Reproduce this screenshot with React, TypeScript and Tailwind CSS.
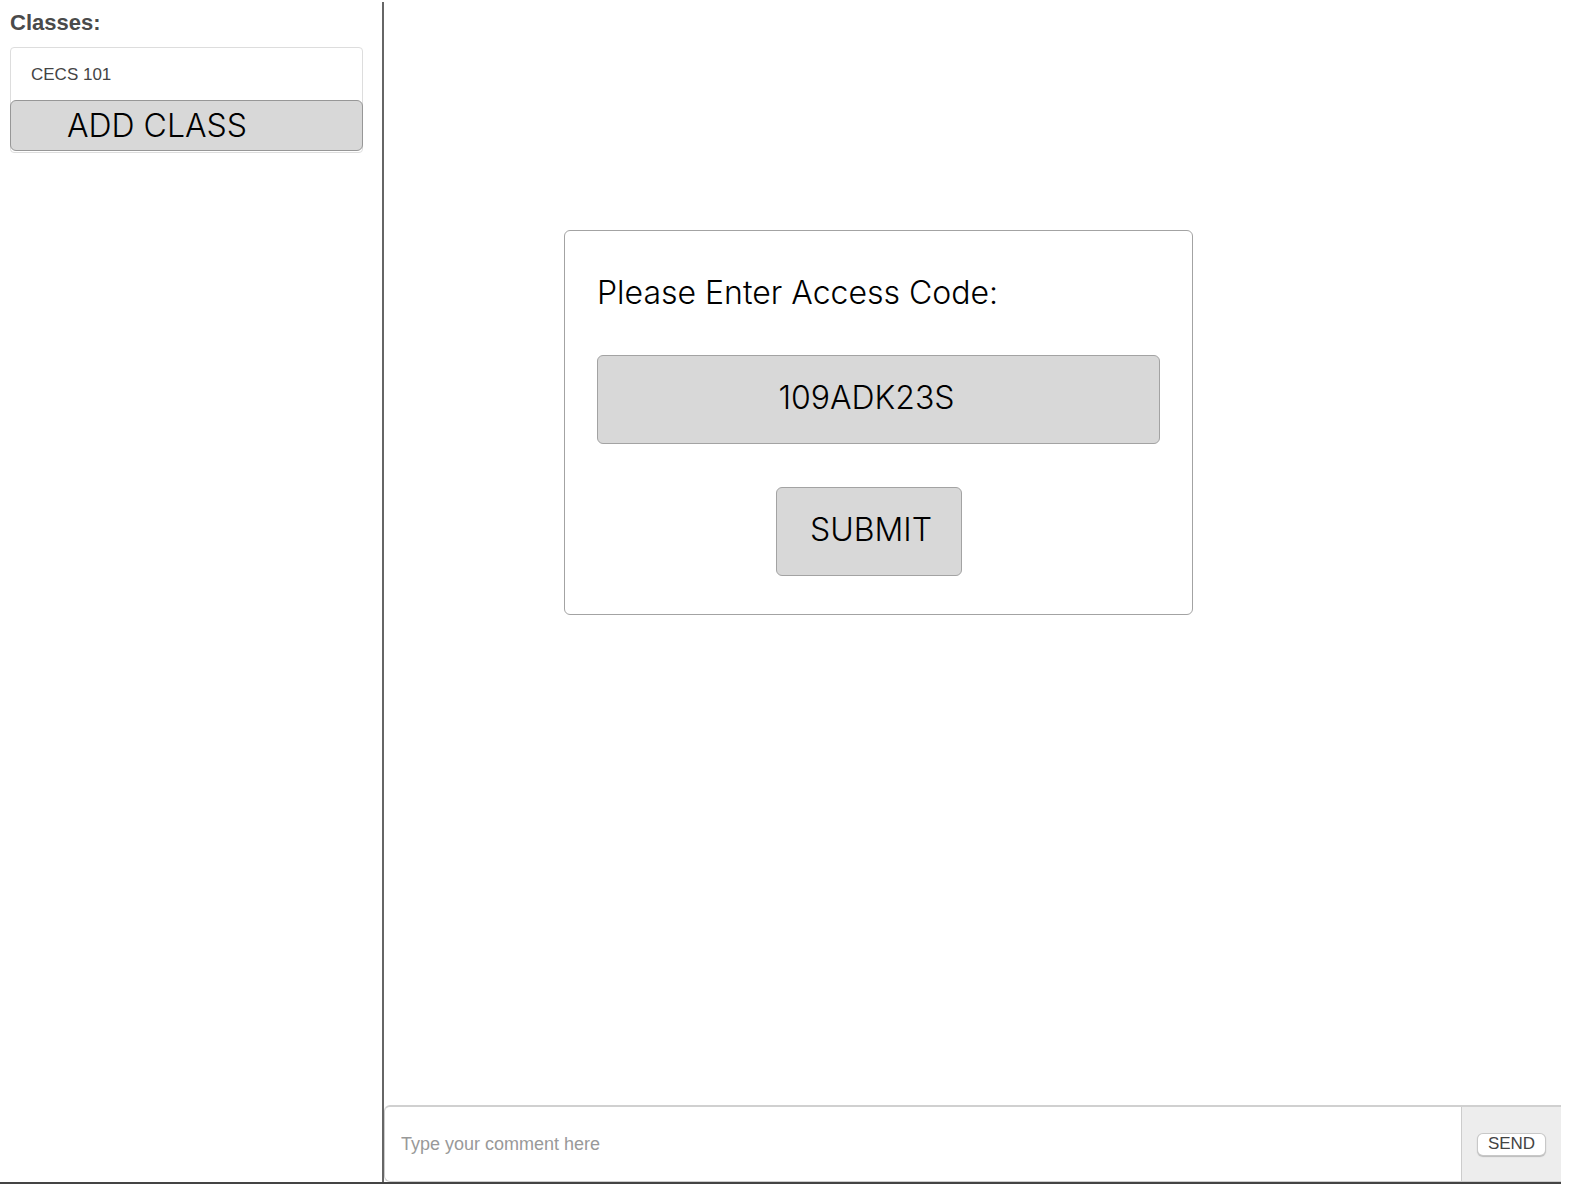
const classes = ["CECS 101"];

function Sidebar() {
  return (
    <aside className="w-[384px] shrink-0 border-r-2 border-[#666] pt-[9px] pr-[19px] pl-[10px]">
      <h2 className="text-[22px] leading-6 font-bold text-[#4a4a4a]">Classes:</h2>
      <div className="mt-3 rounded border border-[#ddd] pb-px">
        <ul>
          {classes.map((name) => (
            <li key={name}>
              <a href="#" className="block px-5 pt-4 pb-[15px] text-[17px] leading-[21px] text-[#444]">
                {name}
              </a>
            </li>
          ))}
        </ul>
        <button
          type="button"
          className="-mx-px block h-[51px] w-[calc(100%+2px)] rounded-md border border-[#979797] bg-[#d8d8d8] pl-14 text-left font-[Inter] text-[32px] leading-8 font-light text-black"
        >
          ADD CLASS
        </button>
      </div>
    </aside>
  );
}

function AccessCodeForm() {
  return (
    <form
      onSubmit={(e) => e.preventDefault()}
      className="mt-[228px] ml-[180px] flex w-full max-w-[629px] flex-col rounded-md border border-[#a3a3a3] px-8 pt-10 pb-[38px] font-[Inter] text-[32px] font-light text-black"
    >
      <label htmlFor="access-code" className="leading-[44px]">
        Please Enter Access Code:
      </label>
      <input
        id="access-code"
        type="text"
        defaultValue="109ADK23S"
        className="mt-10 h-[89px] w-full rounded-md border border-[#a3a3a3] bg-[#d8d8d8] pr-6 pb-1 text-center"
      />
      <button
        type="submit"
        className="mt-[43px] ml-[179px] h-[89px] w-[186px] rounded-md border border-[#a3a3a3] bg-[#d8d8d8] pb-1 pl-1"
      >
        SUBMIT
      </button>
    </form>
  );
}

function CommentBar() {
  return (
    <form
      onSubmit={(e) => e.preventDefault()}
      className="flex h-[77px] overflow-hidden rounded-l-md border-t-2 border-b border-l border-t-[#d0d0d0] border-b-[#ccc] border-l-[#ccc] text-[18px]"
    >
      <input
        type="text"
        aria-label="Comment"
        placeholder="Type your comment here"
        className="min-w-0 flex-1 px-4 text-[#555] placeholder:text-[#999]"
      />
      <div className="flex w-[100px] items-center justify-center border-l border-[#ccc] bg-[#ededed]">
        <button
          type="submit"
          className="h-[21px] w-[67px] rounded-[5px] bg-white text-[17px] leading-5 text-[#444] shadow-[0_0_0_1px_#c8c8c8,0_1px_1px_1px_#bbb]"
        >
          SEND
        </button>
      </div>
    </form>
  );
}

export default function App() {
  return (
    <div className="flex min-h-screen flex-col bg-white pt-0.5 pr-[21px] pb-5 font-['Liberation_Sans',Arial,sans-serif]">
      <div className="flex flex-1 border-b-2 border-[#444]">
        <Sidebar />
        <main className="flex min-w-0 flex-1 flex-col justify-between">
          <AccessCodeForm />
          <CommentBar />
        </main>
      </div>
    </div>
  );
}
